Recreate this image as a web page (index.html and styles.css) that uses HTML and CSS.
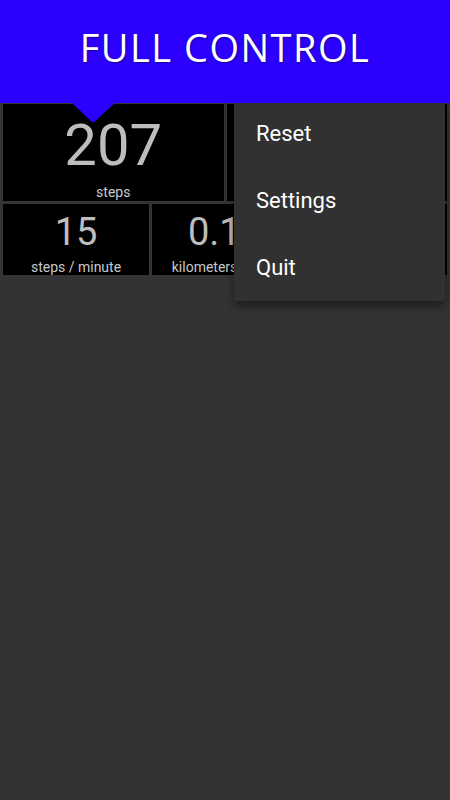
FILE: index.html
```html
<!DOCTYPE html>
<html lang="en">
<head>
<meta charset="UTF-8" />
<meta name="viewport" content="width=device-width, initial-scale=1" />
<title>Full Control | Pedometer</title>
<link rel="stylesheet" href="styles.css">
</head>
<body>

<header class="banner">
  <h1>FULL CONTROL</h1>
  <span class="pointer"></span>
</header>

<main class="stats">
  <div class="row row-top">
    <div class="cell">
      <div class="value">207</div>
      <div class="label">steps</div>
    </div>
    <div class="cell"></div>
  </div>
  <div class="row row-bottom">
    <div class="cell">
      <div class="value">15</div>
      <div class="label">steps / minute</div>
    </div>
    <div class="cell">
      <div class="value">0.13</div>
      <div class="label">kilometers / hour</div>
    </div>
    <div class="cell"></div>
  </div>
</main>

<!-- overflow menu, opened -->
<ul class="menu">
  <li>Reset</li>
  <li>Settings</li>
  <li>Quit</li>
</ul>

</body>
</html>
```

FILE: styles.css
```css
body {
  margin: 0;
  background-color: #333333;
  font-family: Roboto, "Liberation Sans", sans-serif;
  min-height: 800px;
  position: relative;
  overflow: hidden;
}
.banner {
  position: relative;
  z-index: 2;
  height: 103px;
  background: #2b00ff;
  box-sizing: border-box;
  padding-top: 28px;
  text-align: center;
}
.banner h1 {
  margin: 0;
  font-family: "Open Sans", "DejaVu Sans", sans-serif;
  font-weight: 500;
  font-size: 38px;
  line-height: 38px;
  letter-spacing: 1.5px;
  color: white;
  text-shadow: 1px 1px 2px rgba(0, 0, 0, 0.4);
}
.pointer {
  position: absolute;
  left: 72px;
  top: 103px;
  width: 0;
  height: 0;
  border-left: 21px solid transparent;
  border-right: 22px solid transparent;
  border-top: 20px solid #2b00ff;
}
.stats {
  padding: 1px 3px 0;
  display: flex;
  flex-direction: column;
  gap: 3px;
}
.row {
  display: flex;
  gap: 3px;
}
.row-top { height: 97px; }
.row-bottom { height: 71px; }
.cell {
  flex: 1;
  background: black;
  text-align: center;
  color: #bdbdbd;
  overflow: hidden;
  white-space: nowrap;
}
.row-top .cell { padding-top: 12px; }
.row-bottom .cell { padding-top: 9px; }
.value {
  line-height: 1;
}
.row-top .value { font-size: 58px; }
.row-bottom .value { font-size: 38px; }
.label {
  font-size: 14px;
  line-height: 16px;
  color: #c8c8c8;
}
.row-top .label { margin-top: 10px; }
.row-bottom .label { margin-top: 8px; }
.menu {
  position: absolute;
  z-index: 1;
  top: 100px;
  left: 234px;
  width: 211px;
  margin: 0;
  padding: 0;
  list-style: none;
  background: #313131;
  border-radius: 2px;
  box-shadow: 0 5px 10px rgba(0, 0, 0, 0.45);
}
.menu li {
  height: 67px;
  display: flex;
  align-items: center;
  padding-left: 22px;
  font-size: 22px;
  color: white;
}
```
